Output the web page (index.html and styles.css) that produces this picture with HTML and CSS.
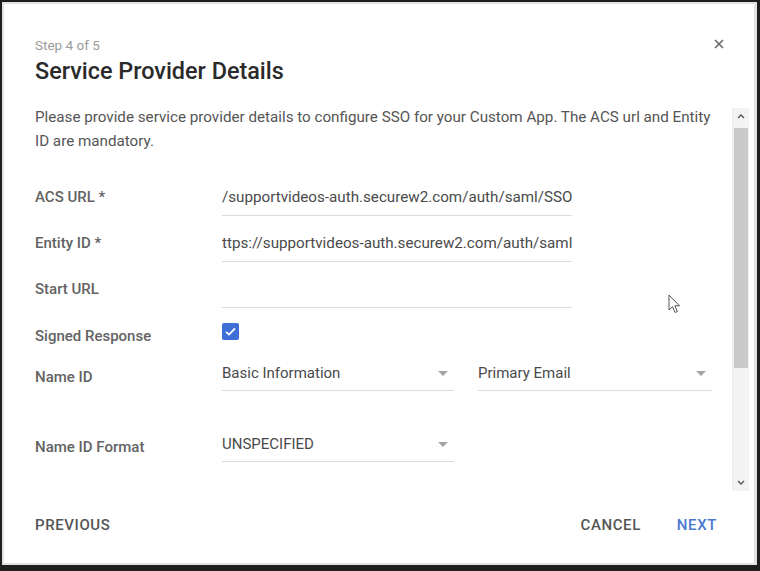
FILE: index.html
```html
<!DOCTYPE html>
<html lang="en">
<head>
<meta charset="utf-8">
<title>Service Provider Details</title>
<link rel="stylesheet" href="styles.css">
</head>
<body>
<div class="screen">
  <div class="dialog">
    <header class="head">
      <div class="titles">
        <div class="step">Step 4 of 5</div>
        <h1 class="title">Service Provider Details</h1>
      </div>
      <button class="close" aria-label="Close">
        <svg viewBox="0 0 10 10" width="10" height="10"><path d="M1 1L9 9M9 1L1 9" stroke="#6b6b6b" stroke-width="1.7" fill="none"/></svg>
      </button>
    </header>

    <div class="body">
      <div class="content">
        <p class="desc">Please provide service provider details to configure SSO for your Custom App. The ACS url and Entity ID are mandatory.</p>

        <div class="row">
          <div class="label">ACS URL *</div>
          <div class="field"><span class="value">/supportvideos-auth.securew2.com/auth/saml/SSO</span></div>
        </div>
        <div class="row">
          <div class="label">Entity ID *</div>
          <div class="field"><span class="value">ttps://supportvideos-auth.securew2.com/auth/saml</span></div>
        </div>
        <div class="row">
          <div class="label">Start URL</div>
          <div class="field"><span class="value"></span></div>
        </div>
        <div class="row row-check">
          <div class="label">Signed Response</div>
          <div class="check">
            <svg viewBox="0 0 17 17" width="17" height="17"><rect x="0" y="0" width="17" height="17" rx="2" fill="#3d6fd6"/><path d="M4 8.8L7 11.6L13 5.4" stroke="#fff" stroke-width="1.8" fill="none"/></svg>
          </div>
        </div>
        <div class="row row-select">
          <div class="label">Name ID</div>
          <div class="selects">
            <div class="select sel-a"><span class="value">Basic Information</span><span class="caret"></span></div>
            <div class="select sel-b"><span class="value">Primary Email</span><span class="caret"></span></div>
          </div>
        </div>
        <div class="row row-select row-format">
          <div class="label">Name ID Format</div>
          <div class="selects">
            <div class="select sel-a"><span class="value">UNSPECIFIED</span><span class="caret"></span></div>
          </div>
        </div>
      </div>
      <div class="scrollbar">
        <div class="sb-btn"><svg viewBox="0 0 8 5" width="8" height="5"><path d="M1 4L4 1L7 4" stroke="#555" stroke-width="1.4" fill="none"/></svg></div>
        <div class="track"><div class="thumb"></div></div>
        <div class="sb-btn"><svg viewBox="0 0 8 5" width="8" height="5"><path d="M1 1L4 4L7 1" stroke="#555" stroke-width="1.4" fill="none"/></svg></div>
      </div>
    </div>

    <footer class="foot">
      <button class="btn">Previous</button>
      <div class="actions">
        <button class="btn">Cancel</button>
        <button class="btn primary">Next</button>
      </div>
    </footer>
  </div>
  <svg class="cursor" viewBox="0 0 13 21" width="13" height="21"><path d="M1 1L1 16L4.5 12.6L7 18.5L9.3 17.5L6.9 11.8L11.5 11.8Z" fill="#fff" stroke="#555" stroke-width="1" stroke-linejoin="round"/></svg>
</div>
</body>
</html>
```
FILE: styles.css
```css
* { box-sizing: border-box; }
html, body { margin: 0; padding: 0; }
body {
  width: 760px;
  height: 571px;
  overflow: hidden;
  font-family: Roboto, "Liberation Sans", sans-serif;
  background: #222;
}
.screen {
  position: relative;
  width: 760px;
  height: 571px;
  background: #1e1e1e;
  padding: 2px 3px 6px 2px;
}
.dialog {
  width: 755px;
  height: 563px;
  background: #fff;
  border: 2px solid #e2e2e2;
  border-right-width: 3px;
  display: flex;
  flex-direction: column;
}
.head {
  display: flex;
  justify-content: space-between;
  align-items: flex-start;
  padding: 33px 30px 21px 31px;
}
.step {
  font-size: 13.5px;
  line-height: 17px;
  color: #9a9a9a;
}
.title {
  margin: 4px 0 0;
  font-size: 23.4px;
  line-height: 26px;
  font-weight: 500;
  color: #2a2a2a;
}
.close {
  border: 0;
  background: none;
  padding: 0;
  margin-top: 2px;
  width: 10px;
  height: 10px;
  display: flex;
}
.body {
  flex: 1;
  display: flex;
  min-height: 0;
}
.content {
  flex: 1;
  padding: 0 12px 0 31px;
  overflow: hidden;
}
.desc {
  margin: 0 0 17px;
  font-size: 15.2px;
  line-height: 24px;
  color: #555;
}
.row {
  display: grid;
  grid-template-columns: 187px 350px;
  align-items: start;
}
.label {
  font-size: 15px;
  font-weight: 500;
  line-height: 20px;
  color: #636363;
  padding-top: 17px;
}
.field {
  padding: 17px 0 8px;
  border-bottom: 1px solid #dcdcdc;
  height: 46px;
}
.value {
  display: block;
  font-size: 15.2px;
  line-height: 20px;
  color: #4a4a4a;
  white-space: nowrap;
  overflow: hidden;
}
.row-check .label { padding-top: 18px; }
.check {
  margin-top: 15px;
  width: 17px;
  height: 17px;
  display: flex;
}
.row-select { grid-template-columns: 187px 490px; }
.row-select .label { padding-top: 21px; }
.row-format { margin-top: 26px; }
.row-format .label { padding-top: 20px; }
.selects {
  display: flex;
  gap: 24px;
}
.select {
  display: flex;
  align-items: center;
  justify-content: space-between;
  padding: 17px 6px 7px 0;
  border-bottom: 1px solid #dcdcdc;
}
.select .value { font-size: 15px; }
.sel-a { width: 232px; }
.sel-b { width: 234px; }
.caret {
  width: 0;
  height: 0;
  border-left: 5px solid transparent;
  border-right: 5px solid transparent;
  border-top: 5px solid #a6a6a6;
}
.scrollbar {
  width: 17px;
  margin: 3px 5px 2px 0;
  background: #f3f3f3;
  border-left: 1px solid #ececec;
  display: flex;
  flex-direction: column;
}
.sb-btn {
  height: 17px;
  display: flex;
  align-items: center;
  justify-content: center;
}
.track {
  flex: 1;
  padding-top: 3px;
}
.thumb {
  height: 240px;
  margin: 0 1px;
  background: #c9c9c9;
}
.foot {
  display: flex;
  justify-content: space-between;
  align-items: center;
  padding: 22px 37px 28px 31px;
}
.actions {
  display: flex;
  gap: 36px;
}
.btn {
  border: 0;
  background: none;
  padding: 0;
  font-family: Roboto, "Liberation Sans", sans-serif;
  font-size: 15px;
  font-weight: 500;
  line-height: 20px;
  letter-spacing: 0.6px;
  text-transform: uppercase;
  color: #555;
}
.btn.primary { color: #4b78cf; }
.cursor {
  position: absolute;
  left: 668px;
  top: 294px;
}
```
